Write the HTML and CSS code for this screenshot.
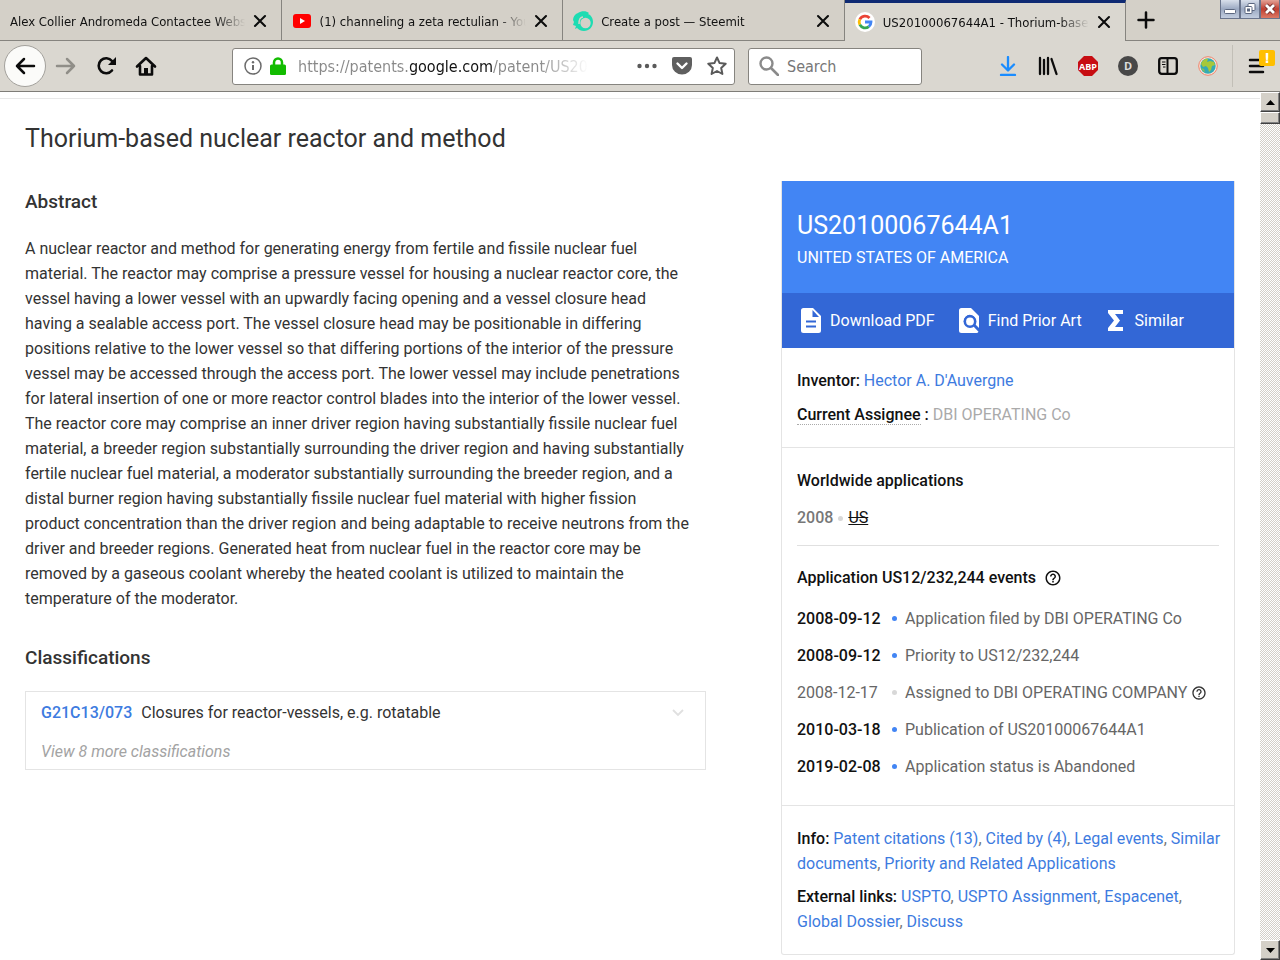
FILE: index.html
```html
<!DOCTYPE html>
<html lang="en">
<head>
    <meta charset="UTF-8">
    <meta name="viewport" content="width=device-width, initial-scale=1.0">
    <title>US20100067644A1 - Thorium-based nuclear reactor and method</title>
    <link rel="stylesheet" href="styles.css">
</head>
<body>
<svg class="defs" aria-hidden="true">
    <symbol id="close" viewBox="0 0 14 14"><path d="M2 2l10 10M12 2L2 12" fill="none" stroke="#0c0c0c" stroke-width="2.1" stroke-linecap="round"/></symbol>
    <symbol id="help" viewBox="0 0 24 24"><path fill="currentColor" d="M11 18h2v-2h-2v2zm1-16C6.48 2 2 6.48 2 12s4.480 10 10 10 10-4.480 10-10S17.520 2 12 2zm0 18c-4.410 0-8-3.590-8-8s3.590-8 8-8 8 3.590 8 8-3.590 8-8 8zm0-14c-2.210 0-4 1.790-4 4h2c0-1.100.9-2 2-2s2 .9 2 2c0 2-3 1.750-3 5h2c0-2.250 3-2.500 3-5 0-2.210-1.790-4-4-4z"/></symbol>
</svg>

<header class="browser">
    <div class="tabs">
        <div class="tab">
            <span class="tab-title">Alex Collier Andromeda Contactee Website</span>
            <button class="tab-close" aria-label="Close tab"><svg width="14" height="14"><use href="#close"/></svg></button>
        </div>
        <div class="tab">
            <svg class="favicon" viewBox="0 0 20 20"><rect x="1" y="3" width="18" height="14" rx="3" fill="#f00"/><path d="M8 7l5 3-5 3z" fill="#fff"/></svg>
            <span class="tab-title">(1) channeling a zeta rectulian - YouTube</span>
            <button class="tab-close" aria-label="Close tab"><svg width="14" height="14"><use href="#close"/></svg></button>
        </div>
        <div class="tab">
            <svg class="favicon" viewBox="0 0 20 20"><path d="M5 2C8 0 13-.5 16 2l-1 1c3 1 5 4 5 8 0 5-4 9-9 9-3 0-5-1-7-3l-2 1 1-3-3-1 1-3-1-2c0-3 2-6 5-7z" fill="#1ddcb2"/><circle cx="12.500" cy="12" r="5.200" fill="#d4d0c8"/><path d="M6 13c0-4 1-7 4-7" fill="none" stroke="#d4d0c8" stroke-width="1.500"/></svg>
            <span class="tab-title">Create a post — Steemit</span>
            <button class="tab-close" aria-label="Close tab"><svg width="14" height="14"><use href="#close"/></svg></button>
        </div>
        <div class="tab tab-active">
            <svg class="favicon" viewBox="0 0 20 20"><circle cx="10" cy="10" r="10" fill="#fff"/><g fill="none" stroke-width="2.800"><path d="M14.500 6A6 6 0 0 0 4.800 7.300" stroke="#ea4335"/><path d="M4.800 7.300a6 6 0 0 0 0 5.400" stroke="#fbbc05"/><path d="M4.800 12.700a6 6 0 0 0 9 2" stroke="#34a853"/><path d="M13.800 14.700A6 6 0 0 0 16 10h-6" stroke="#4285f4"/></g></svg>
            <span class="tab-title">US20100067644A1 - Thorium-based nuclear</span>
            <button class="tab-close" aria-label="Close tab"><svg width="14" height="14"><use href="#close"/></svg></button>
        </div>
        <div class="tab-rest">
            <button class="new-tab" aria-label="New tab"><svg width="18" height="18" viewBox="0 0 18 18"><path d="M9 1.500v15M1.500 9h15" stroke="#0c0c0c" stroke-width="2.500" stroke-linecap="round"/></svg></button>
            <div class="window-buttons">
                <button aria-label="Minimize"><svg width="18" height="18" viewBox="1 0 18 18"><rect x="4.500" y="9.500" width="11" height="4" rx="1" fill="#fff" stroke="#5b6780"/></svg></button>
                <button aria-label="Restore"><svg width="18" height="18" viewBox="1 0 18 18"><g fill="#fff" stroke="#5b6780"><rect x="8" y="3.500" width="7" height="7" rx="1"/><rect x="5" y="6.500" width="7" height="7" rx="1"/><rect x="7.500" y="9" width="2" height="2"/></g></svg></button>
                <button class="window-close" aria-label="Close"><svg width="18" height="18" viewBox="1 0 18 18"><path d="M6 5l8 8M14 5l-8 8" stroke="#6b2a2a" stroke-width="4.500"/><path d="M6 5l8 8M14 5l-8 8" stroke="#fff" stroke-width="2.800"/></svg></button>
            </div>
        </div>
    </div>

    <div class="toolbar">
        <div class="nav-buttons">
            <button class="back" aria-label="Back"><svg width="22" height="20" viewBox="0 0 22 20"><path d="M10 3l-7 7 7 7M3 10h17" fill="none" stroke="#0c0c0c" stroke-width="2.500" stroke-linecap="round" stroke-linejoin="round"/></svg></button>
            <button aria-label="Forward"><svg width="22" height="20" viewBox="0 0 22 20"><path d="M12 3l7 7-7 7M19 10H2" fill="none" stroke="#908e88" stroke-width="2.500" stroke-linecap="round" stroke-linejoin="round"/></svg></button>
            <button aria-label="Reload"><svg width="22" height="20" viewBox="0 0 22 20"><path d="M17 14.500A7.500 7.500 0 1 1 17 5" fill="none" stroke="#0c0c0c" stroke-width="2.600" stroke-linecap="round"/><path d="M21 1v8h-8z" fill="#0c0c0c"/></svg></button>
            <button aria-label="Home"><svg width="22" height="20" viewBox="0 0 22 20"><path d="M2 10.500L11 2l9 8.500M5 10v8.500h12V10" fill="none" stroke="#0c0c0c" stroke-width="2.600" stroke-linecap="round" stroke-linejoin="round"/><path d="M9 18v-6h4v6z" fill="#0c0c0c"/></svg></button>
        </div>
        <div class="field url-bar">
            <svg width="18" height="18" viewBox="0 0 18 18"><circle cx="9" cy="9" r="8" fill="none" stroke="#6b6b6b" stroke-width="1.500"/><path d="M9 8v5" stroke="#6b6b6b" stroke-width="2"/><circle cx="9" cy="5.300" r="1.200" fill="#6b6b6b"/></svg>
            <svg width="16" height="18" viewBox="0 0 16 18"><rect y="7.500" width="16" height="10.500" rx="1.500" fill="#12bc00"/><path d="M4 9V5.500a4 4 0 0 1 8 0V9" fill="none" stroke="#12bc00" stroke-width="2.500"/></svg>
            <input class="url" type="text" aria-label="Address" value="https://patents.google.com/patent/US20100067644A1/en">
            <button aria-label="Page actions"><svg width="20" height="20" viewBox="0 0 20 20"><g fill="#5a5a5a"><circle cx="2.500" cy="10" r="2.200"/><circle cx="10" cy="10" r="2.200"/><circle cx="17.500" cy="10" r="2.200"/></g></svg></button>
            <button aria-label="Save to Pocket"><svg width="20" height="20" viewBox="0 0 20 20"><path d="M2 1h16a2 2 0 0 1 2 2v6a10 9.500 0 0 1-20 0V3a2 2 0 0 1 2-2z" fill="#5f5f5f"/><path d="M5.500 7.500L10 12l4.500-4.500" fill="none" stroke="#fff" stroke-width="2.400" stroke-linecap="round" stroke-linejoin="round"/></svg></button>
            <button aria-label="Bookmark"><svg width="20" height="20" viewBox="0 0 20 20"><path d="M10 1.500l2.600 5.600 6.100.7-4.500 4.200 1.200 6L10 15l-5.400 3 1.200-6-4.500-4.200 6.100-.7z" fill="none" stroke="#5a5a5a" stroke-width="2" stroke-linejoin="round"/></svg></button>
        </div>
        <div class="field search-bar">
            <svg width="20" height="20" viewBox="0 0 20 20"><circle cx="7.500" cy="7.500" r="6" fill="none" stroke="#8a8a8a" stroke-width="2.400"/><path d="M12 12l7 7" stroke="#8a8a8a" stroke-width="2.600" stroke-linecap="round"/></svg>
            <input type="text" aria-label="Search" placeholder="Search">
        </div>
        <div class="tools">
            <button aria-label="Downloads"><svg width="20" height="20" viewBox="0 0 20 20"><path d="M10 1v13M4 8.500l6 6 6-6M3 19h14" fill="none" stroke="#1a8cff" stroke-width="2.300" stroke-linecap="round" stroke-linejoin="round"/></svg></button>
            <button aria-label="Library"><svg width="20" height="20" viewBox="0 0 20 20"><path d="M2 2v16M6 4v14M10 2v16M13.500 3l5 15" fill="none" stroke="#0c0c0c" stroke-width="2.300" stroke-linecap="round"/></svg></button>
            <button aria-label="Adblock Plus"><svg width="20" height="20" viewBox="0 0 20 20"><path d="M6 0h8l6 6v8l-6 6H6l-6-6V6z" fill="#c70d12"/><text class="abp" x="10" y="13.500" text-anchor="middle">ABP</text></svg></button>
            <button aria-label="Disconnect"><svg width="20" height="20" viewBox="0 0 20 20"><circle cx="10" cy="10" r="10" fill="#484848"/><text class="dis" x="10" y="14" text-anchor="middle">D</text></svg></button>
            <button aria-label="Sidebars"><svg width="20" height="20" viewBox="0 0 20 20"><rect x="1.200" y="2.200" width="17.600" height="15.600" rx="2.500" fill="none" stroke="#0c0c0c" stroke-width="2.300"/><path d="M9.500 2v16" stroke="#0c0c0c" stroke-width="2"/><path d="M4 6h3.500M4 8.500h3.500M5 11h2.500" stroke="#0c0c0c"/></svg></button>
            <button aria-label="Globe"><svg width="20" height="20" viewBox="0 0 20 20"><circle cx="10" cy="10" r="9.300" fill="#fbe9dc" stroke="#f0826a"/><circle cx="10" cy="10" r="7.700" fill="#35a9b5"/><path d="M3 8c1-4 5-6 7-5l-1 3 3-1 4 1 1 3-3 1-1 4-2 2-1-4-2-2-3 1z" fill="#a6c83a"/><path d="M3 12l3 1 1 3c-2-.5-3-2-4-4z" fill="#7fc05a"/></svg></button>
            <button class="menu" aria-label="Menu"><svg width="20" height="20" viewBox="0 0 20 20"><path d="M3 4h13M3 10h13M3 16h13" stroke="#0c0c0c" stroke-width="2.500" stroke-linecap="round"/></svg><span class="badge">!</span></button>
        </div>
    </div>
</header>

<div class="viewport">
    <main class="page">
        <h1>Thorium-based nuclear reactor and method</h1>
        <div class="columns">
            <div class="content">
                <h2>Abstract</h2>
                <p class="abstract">A nuclear reactor and method for generating energy from fertile and fissile nuclear fuel material. The reactor may comprise a pressure vessel for housing a nuclear reactor core, the vessel having a lower vessel with an upwardly facing opening and a vessel closure head having a sealable access port. The vessel closure head may be positionable in differing positions relative to the lower vessel so that differing portions of the interior of the pressure vessel may be accessed through the access port. The lower vessel may include penetrations for lateral insertion of one or more reactor control blades into the interior of the lower vessel. The reactor core may comprise an inner driver region having substantially fissile nuclear fuel material, a breeder region substantially surrounding the driver region and having substantially fertile nuclear fuel material, a moderator substantially surrounding the breeder region, and a distal burner region having substantially fissile nuclear fuel material with higher fission product concentration than the driver region and being adaptable to receive neutrons from the driver and breeder regions. Generated heat from nuclear fuel in the reactor core may be removed by a gaseous coolant whereby the heated coolant is utilized to maintain the temperature of the moderator.</p>
                <h2>Classifications</h2>
                <div class="classes">
                    <div class="class-row">
                        <a href="#" class="code">G21C13/073</a>
                        <span>Closures for reactor-vessels, e.g. rotatable</span>
                        <button class="expand" aria-label="Expand"><svg width="14" height="10" viewBox="0 0 14 10"><path d="M2 2l5 5 5-5" fill="none" stroke="#e0e0e0" stroke-width="1.800"/></svg></button>
                    </div>
                    <button class="more">View 8 more classifications</button>
                </div>
            </div>

            <aside class="card">
                <div class="card-head">
                    <div class="number">US20100067644A1</div>
                    <div>UNITED STATES OF AMERICA</div>
                </div>
                <nav class="actions">
                    <a href="#"><svg width="20" height="25" viewBox="0 0 20 25"><path d="M2.500 0H12l8 8v14.500a2.500 2.500 0 0 1-2.500 2.500h-15A2.500 2.500 0 0 1 0 22.500v-20A2.500 2.500 0 0 1 2.500 0z" fill="#fff"/><path d="M11.500 2v7H18z" fill="#3367d6"/><path d="M5 13.500h10M5 18.500h10" stroke="#3367d6" stroke-width="2.200"/></svg>Download PDF</a>
                    <a href="#"><svg width="20" height="25" viewBox="0 0 20 25"><path d="M2.500 0H12l8 8v12l-4-4a6 6 0 1 0-2 2l5.500 5.700a2.500 2.500 0 0 1-2 1.300h-15A2.500 2.500 0 0 1 0 22.500v-20A2.500 2.500 0 0 1 2.500 0z" fill="#fff"/><circle cx="11" cy="13.500" r="6.500" fill="#3367d6"/><circle cx="11" cy="13.500" r="3.900" fill="#fff"/></svg>Find Prior Art</a>
                    <a href="#"><svg width="20" height="25" viewBox="0 0 20 25"><path d="M2 2h15v4H9l5 6.500L9 19h8v4H2v-3l6-7.500L2 5z" fill="#fff"/></svg>Similar</a>
                </nav>
                <section class="people">
                    <div><b>Inventor:</b> <a href="#">Hector A. D'Auvergne</a></div>
                    <div><b><span class="dotted">Current Assignee</span> :</b> <span class="muted">DBI OPERATING Co</span></div>
                </section>
                <section class="timeline">
                    <h3>Worldwide applications</h3>
                    <div class="world"><span class="year">2008</span><i class="dot dot-grey"></i><a href="#">US</a></div>
                    <hr>
                    <h3>Application US12/232,244 events <svg width="18" height="18"><use href="#help"/></svg></h3>
                    <table class="events">
                        <tr><td class="date">2008-09-12</td><td><i class="dot"></i></td><td>Application filed by DBI OPERATING Co</td></tr>
                        <tr><td class="date">2008-09-12</td><td><i class="dot"></i></td><td>Priority to US12/232,244</td></tr>
                        <tr><td>2008-12-17</td><td><i class="dot dot-grey"></i></td><td>Assigned to DBI OPERATING COMPANY <svg width="16" height="16"><use href="#help"/></svg></td></tr>
                        <tr><td class="date">2010-03-18</td><td><i class="dot"></i></td><td>Publication of US20100067644A1</td></tr>
                        <tr><td class="date">2019-02-08</td><td><i class="dot"></i></td><td>Application status is Abandoned</td></tr>
                    </table>
                </section>
                <section class="links">
                    <div><b>Info:</b> <a href="#">Patent citations (13)</a>, <a href="#">Cited by (4)</a>, <a href="#">Legal events</a>, <a href="#">Similar documents</a>, <a href="#">Priority and Related Applications</a></div>
                    <div><b>External links:</b> <a href="#">USPTO</a>, <a href="#">USPTO Assignment</a>, <a href="#">Espacenet</a>, <a href="#">Global Dossier</a>, <a href="#">Discuss</a></div>
                </section>
            </aside>
        </div>
    </main>
    <div class="scrollbar">
        <button aria-label="Scroll up"><svg width="9" height="5" viewBox="0 0 9 5"><path d="M0 5L4.500 0 9 5z"/></svg></button>
        <div class="thumb"></div>
        <button class="down" aria-label="Scroll down"><svg width="9" height="5" viewBox="0 0 9 5"><path d="M0 0h9L4.500 5z"/></svg></button>
    </div>
</div>
</body>
</html>
```
FILE: styles.css
```css
* {
    box-sizing: border-box;
}
body {
    margin: 0;
    height: 100vh;
    display: flex;
    flex-direction: column;
    overflow: hidden;
    font-family: Roboto, sans-serif;
    font-size: 16px;
    color: #333;
    background-color: #fff;
}
.defs {
    position: absolute;
    width: 0;
    height: 0;
}
svg {
    flex-shrink: 0;
}
button {
    font: inherit;
    color: inherit;
    background: none;
    border: none;
    padding: 0;
    display: flex;
    align-items: center;
    justify-content: center;
}
a {
    color: #3d7be0;
    text-decoration: none;
}
b, h3 {
    font-weight: 500;
    color: #111;
}

/* browser window */
.browser {
    flex-shrink: 0;
    font-family: "DejaVu Sans Condensed", "Open Sans", sans-serif;
    font-size: 13px;
    color: #111;
    background-color: #dad7d0;
    border-bottom: 1px solid #7f7d78;
}
.tabs {
    display: flex;
    height: 41px;
}
.tab {
    flex: 0 0 22%;
    min-width: 0;
    display: flex;
    align-items: center;
    gap: 8px;
    padding: 2px 14px 0 10px;
    background-color: #d4d0c8;
    border-right: 1px solid #86847f;
    border-bottom: 1px solid #86847f;
}
.tab-active {
    background-color: #dad7d0;
    border-top: 3px solid #0f2a73;
    border-bottom: none;
    padding-top: 0;
}
.favicon {
    width: 20px;
    height: 20px;
}
.tab-title {
    flex: 1;
    min-width: 0;
    overflow: hidden;
    white-space: nowrap;
    mask-image: linear-gradient(to left, transparent, #000 30px);
}
.tab-rest {
    flex: 1;
    display: flex;
    justify-content: space-between;
    background-color: #d4d0c8;
    border-bottom: 1px solid #86847f;
}
.new-tab {
    width: 40px;
}
.window-buttons {
    display: flex;
    height: 19px;
}
.window-buttons button {
    border: 1px solid #69748c;
    border-top: none;
    background: linear-gradient(#d8dfeb, #9ba9c2 50%, #c2cddf);
}
.window-buttons .window-close {
    background: linear-gradient(#e3a296, #c03e31 50%, #dc7a66);
}
.toolbar {
    display: flex;
    align-items: center;
    height: 50px;
    padding: 0 13px 0 4px;
}
.nav-buttons {
    display: flex;
    align-items: center;
    width: 228px;
    flex-shrink: 0;
}
.nav-buttons button {
    width: 40px;
    height: 42px;
}
.nav-buttons .back {
    width: 42px;
    background-color: #fbfbf9;
    border: 1px solid #a3a19c;
    border-radius: 50%;
}
.field {
    min-width: 0;
    display: flex;
    align-items: center;
    height: 37px;
    background-color: #fff;
    border: 1px solid #86847f;
    border-radius: 3px;
}
.field input {
    flex: 1;
    width: 0;
    min-width: 0;
    border: none;
    outline: none;
    padding: 0;
    height: 32px;
    font: inherit;
    font-size: 16px;
    background-color: transparent;
}
.field input::placeholder {
    color: #777;
    opacity: 1;
}
.url-bar {
    flex: 1;
    gap: 8px;
    padding: 0 7px 0 11px;
}
.url-bar button {
    margin-left: 7px;
}
.field .url {
    margin-left: 4px;
    margin-right: 34px;
    color: transparent;
    background-image: linear-gradient(to right, #888 112px, #111 112px, #111 195px, #888 195px, #888 240px, #fff 290px);
    background-clip: text;
    -webkit-background-clip: text;
}
.search-bar {
    flex: 0 0 174px;
    gap: 8px;
    margin-left: 13px;
    padding: 0 10px;
}
.tools {
    display: flex;
    gap: 20px;
    margin-left: 76px;
}
.tools .menu {
    position: relative;
    height: 42px;
    margin: -11px 0 -11px -6px;
    padding-left: 14px;
    border-left: 1px solid #c2bfb7;
}
.badge {
    position: absolute;
    top: 5px;
    right: -8px;
    width: 16px;
    line-height: 16px;
    font-size: 14px;
    font-weight: bold;
    color: #fff;
    background-color: #ffbf00;
    border-radius: 2px;
}
.abp {
    font: bold 9px "Open Sans", sans-serif;
    fill: #fff;
}
.dis {
    font: bold 11px "Open Sans", sans-serif;
    fill: #ddd;
}

/* patent page */
.viewport {
    flex: 1;
    min-height: 0;
    display: flex;
}
.page {
    flex: 1;
    margin-top: 6px;
    padding: 24px 25px 0;
    border-top: 1px solid #e8e8e8;
    overflow: hidden;
}
h1 {
    margin: 0;
    font-size: 25px;
    font-weight: 400;
    line-height: 32px;
}
h2 {
    margin: 0;
    font-size: 19px;
    font-weight: 500;
    line-height: 24px;
}
h3 {
    margin: 0;
    font-size: 16px;
    line-height: 24px;
}
.columns {
    display: grid;
    grid-template-columns: 681fr 454fr;
    column-gap: 75px;
    align-items: start;
    margin-top: 26px;
}
.content {
    padding-top: 9px;
}
.abstract {
    max-width: 666px;
    margin: 22px 0 35px;
    line-height: 25px;
}
.classes {
    margin-top: 21px;
    padding: 9px 20px 5px 15px;
    border: 1px solid #e4e4e4;
    line-height: 24px;
}
.class-row {
    display: flex;
    gap: 9px;
    margin-bottom: 15px;
}
.code {
    font-weight: 500;
}
.expand {
    margin-left: auto;
}
.more {
    font-style: italic;
    line-height: 24px;
    color: #a3a3a3;
}
.card {
    border: 1px solid #e4e4e4;
    border-top: none;
    border-radius: 0 0 3px 3px;
    line-height: 24px;
}
.card-head {
    padding: 29px 15px 23px;
    color: #fff;
    background-color: #4285f4;
}
.number {
    margin-bottom: 4px;
    font-size: 25px;
    line-height: 32px;
}
.actions {
    display: flex;
    gap: 24px;
    height: 55px;
    padding: 0 19px;
    background-color: #3367d6;
}
.actions a {
    display: flex;
    align-items: center;
    gap: 9px;
    color: #fff;
}
.card section {
    padding: 21px 15px 20px;
}
.card section + section {
    border-top: 1px solid #e4e4e4;
}
.people {
    display: grid;
    gap: 10px;
}
.dotted {
    border-bottom: 1px dotted #aaa;
}
.muted {
    color: #aaa;
}
.world {
    display: flex;
    align-items: center;
    gap: 5px;
    margin-top: 13px;
}
.world .year {
    font-weight: 500;
    color: #777;
}
.world a {
    color: #111;
    text-decoration: underline line-through;
}
.dot {
    display: block;
    width: 5px;
    height: 5px;
    border-radius: 50%;
    background-color: #4285f4;
}
.dot-grey {
    background-color: #d8d8d8;
}
hr {
    margin: 15px 0 20px;
    border: none;
    border-top: 1px solid #e0e0e0;
}
h3 svg {
    margin-left: 4px;
    vertical-align: -4px;
}
.events {
    margin-top: 10px;
    border-collapse: collapse;
    color: #666;
}
.events tr {
    height: 37px;
}
.events td {
    padding: 0 8px 0 0;
}
.events td:first-child {
    width: 95px;
}
.events td:last-child {
    padding-right: 0;
    white-space: nowrap;
}
.events .date {
    font-weight: 500;
    color: #111;
}
.events svg {
    color: #333;
    vertical-align: -3px;
}
.card .links {
    display: grid;
    gap: 8px;
    padding: 20px 8px 20px 15px;
    line-height: 25px;
    color: #777;
}

/* scrollbar */
.scrollbar {
    width: 20px;
    display: flex;
    flex-direction: column;
    background: repeating-conic-gradient(#d4d0c8 0 25%, #fff 0 50%) 0 0 / 2px 2px;
}
.scrollbar button, .thumb {
    height: 20px;
    background-color: #d4d0c8;
    border: 1px solid;
    border-color: #fff #404040 #404040 #fff;
    box-shadow: inset -1px -1px #808080;
}
.thumb {
    height: 12px;
}
.scrollbar .down {
    margin-top: auto;
}
```
